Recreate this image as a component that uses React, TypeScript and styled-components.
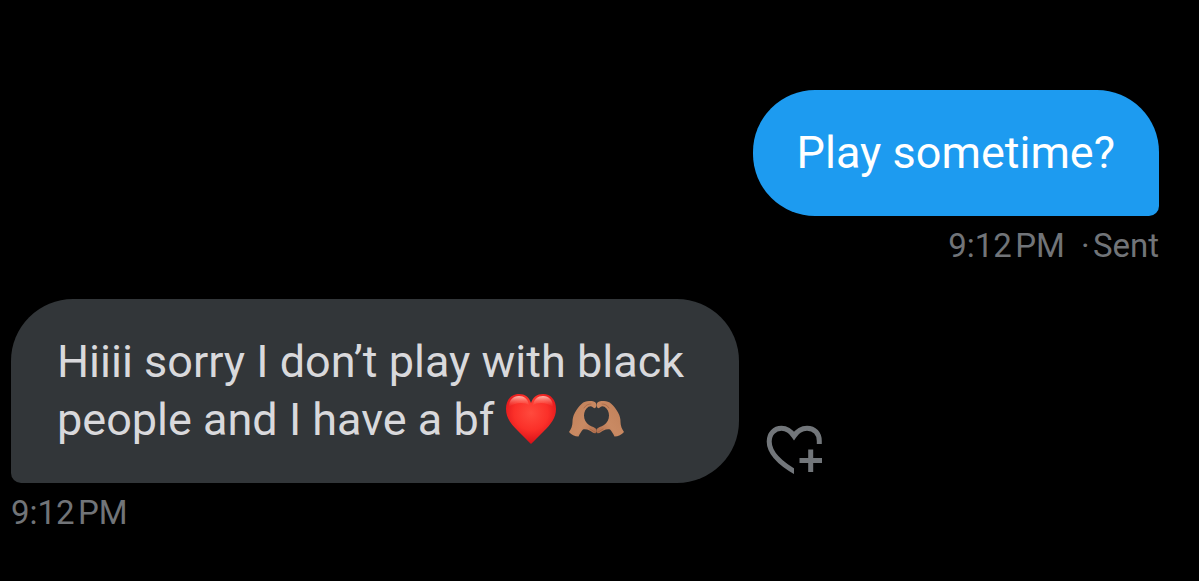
import React from "react";
import styled, { createGlobalStyle } from "styled-components";

const GlobalStyle = createGlobalStyle`
  body {
    margin: 0;
    background: #000;
    font-family: Roboto, "Liberation Sans", sans-serif;
  }
`;

const Conversation = styled.main`
  display: flex;
  flex-direction: column;
  gap: 32px;
  padding: 90px 40px 24px 11px;
`;

const Message = styled.article<{ $own?: boolean }>`
  display: flex;
  flex-direction: column;
  align-items: ${(p) => (p.$own ? "flex-end" : "flex-start")};
  gap: 9px;
`;

const BubbleRow = styled.div`
  display: flex;
  align-items: flex-end;
  gap: 27px;
`;

const Bubble = styled.p<{ $own?: boolean }>`
  box-sizing: border-box;
  margin: 0;
  max-width: 728px;
  padding: 34px ${(p) => (p.$own ? "44px" : "46px")};
  border-radius: ${(p) => (p.$own ? "62px 62px 10px 62px" : "62px 62px 62px 10px")};
  background: ${(p) => (p.$own ? "#1d9bf0" : "#323639")};
  color: ${(p) => (p.$own ? "#fff" : "#d9d9dc")};
  font-size: 45px;
  line-height: 58px;
`;

const Meta = styled.footer`
  display: flex;
  gap: 16px;
  color: #717478;
  font-size: 33px;
  line-height: 42px;
`;

const ReactButton = styled.button`
  display: flex;
  margin: 0 0 8px;
  padding: 0;
  border: 0;
  background: none;
  color: #72767a;
  cursor: pointer;
`;

const Emoji = styled.svg<{ $width: number }>`
  width: ${(p) => p.$width}px;
  height: 52px;
  vertical-align: -10px;
`;

const RedHeart = () => (
  <Emoji $width={52} viewBox="2 0 52 52" role="img" aria-label="red heart">
    <defs>
      <radialGradient id="heartFill" cx="50%" cy="38%" r="62%">
        <stop offset="0" stopColor="#ff4a3d" />
        <stop offset="0.55" stopColor="#fb3029" />
        <stop offset="1" stopColor="#d80f17" />
      </radialGradient>
      <linearGradient id="heartShine" x1="0" y1="0" x2="0" y2="1">
        <stop offset="0" stopColor="#ffc9bd" stopOpacity="0.9" />
        <stop offset="1" stopColor="#ff5a48" stopOpacity="0" />
      </linearGradient>
    </defs>
    <path
      d="M28 51C25 48 20 43 15 38C8 31 3 25 3 16C3 7 8 1 16 1C22 1 26 4 28 10C30 4 34 1 40 1C48 1 53 7 53 16C53 25 48 31 41 38C36 43 31 48 28 51Z"
      fill="url(#heartFill)"
    />
    <path d="M6 14C6 7 10 3 16 3C21 3 25 6 26 12C22 9 12 9 6 14Z" fill="url(#heartShine)" />
    <path d="M50 14C50 7 46 3 40 3C35 3 31 6 30 12C34 9 44 9 50 14Z" fill="url(#heartShine)" />
  </Emoji>
);

const HAND =
  "M1 32C3 29 4.500 26 4.500 22C4.500 19 5 16 7 12.500C9 9 11 6 13.500 4C16 1.500 19 .8 22 1C24 1 26 1.300 27.500 2.500C28.800 4 28.500 6.500 27.500 7.800C26.500 8.600 25.500 8 24.500 7C23.500 6 22 6 20.500 6.800C17.500 8.800 16 12 16 15.500C16 19.500 18 23 21 25C24 26.800 27 27.300 28.200 29C28.800 31 28.800 32.500 27.500 33.200C25.500 33.500 23.500 31.500 21.500 30.500C19.500 29.500 17 29 15 29.500C13.500 31 12 33.500 10.500 36.500C7 36.500 3 34.500 1 32Z";

const HeartHands = () => (
  <Emoji $width={57} viewBox="1 -7 57 52" role="img" aria-label="heart hands">
    <defs>
      <linearGradient id="handFill" x1="0" y1="0" x2="1" y2="1">
        <stop offset="0" stopColor="#c07f58" />
        <stop offset="0.6" stopColor="#c98a63" />
        <stop offset="1" stopColor="#b06c4b" />
      </linearGradient>
    </defs>
    <g fill="url(#handFill)">
      <path d={HAND} />
      <path d={HAND} transform="translate(57 0) scale(-1 1)" />
    </g>
    <g fill="none" stroke="#94573a" strokeOpacity="0.5" strokeLinecap="round">
      <path d="M16 8C18 5 20 4 23 4M22 29C24 30 26 31.500 27.500 32.500" />
      <path d="M41 8C39 5 37 4 34 4M35 29C33 30 31 31.500 29.500 32.500" />
    </g>
  </Emoji>
);

const HeartPlusIcon = () => (
  <svg width="57" height="50" viewBox="0 0 57 50" fill="none" stroke="currentColor" strokeWidth="5" aria-hidden="true">
    <clipPath id="heartCut">
      <path d="M0 0H57V24H28V50H0Z" />
    </clipPath>
    <path
      clipPath="url(#heartCut)"
      d="M32 48.500C13 38 3.200 27 3.200 16.500C3.200 8.500 8.500 3.300 15.500 3.300C21 3.300 25 6.500 28 11C31 6.500 35 3.300 41 3.300C48.500 3.300 53.300 8.500 53.300 16V19"
    />
    <path d="M33.500 35.500H56M44.700 24.500V47" />
  </svg>
);

export default function App() {
  return (
    <>
      <GlobalStyle />
      <Conversation>
        <Message $own>
          <Bubble $own>Play sometime?</Bubble>
          <Meta>
            <time dateTime="21:12">9:12{"\u200a"}PM</time>
            <span>·{"\u200a"}Sent</span>
          </Meta>
        </Message>
        <Message>
          <BubbleRow>
            <Bubble>
              Hiiii sorry I don’t play with black people and I have a bf <RedHeart /> <HeartHands />
            </Bubble>
            <ReactButton type="button" aria-label="Add reaction">
              <HeartPlusIcon />
            </ReactButton>
          </BubbleRow>
          <Meta>
            <time dateTime="21:12">9:12{"\u200a"}PM</time>
          </Meta>
        </Message>
      </Conversation>
    </>
  );
}
